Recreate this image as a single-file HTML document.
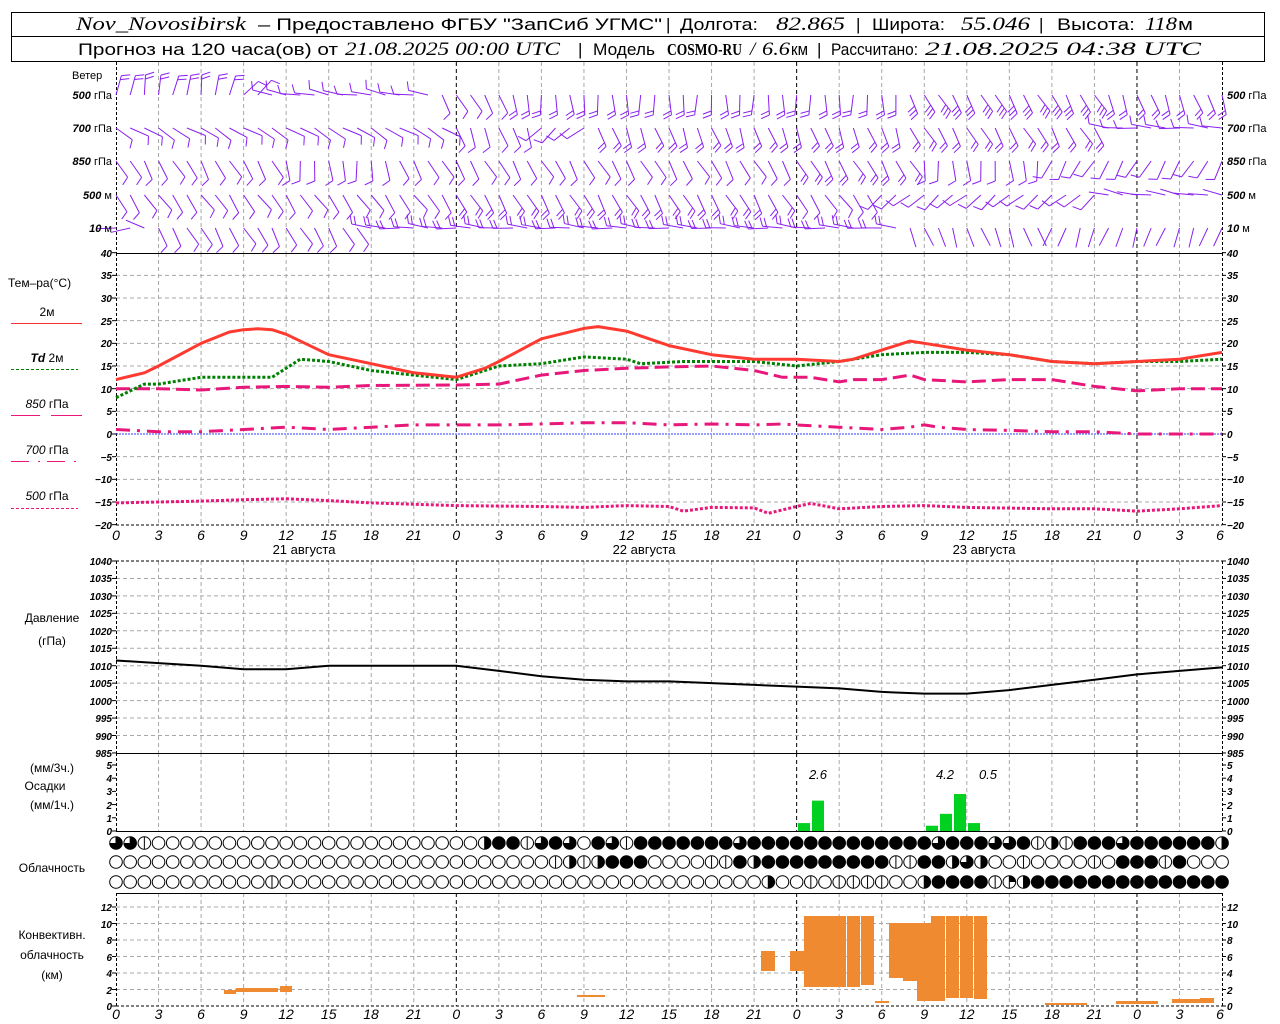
<!DOCTYPE html>
<html><head><meta charset="utf-8"><style>
html,body{margin:0;padding:0;background:#fff;}
svg{display:block;}
text{font-family:"Liberation Sans",sans-serif;fill:#000;}
.t{font-size:10px;font-style:italic;font-weight:bold;}
.h{font-size:14px;font-style:italic;}
.lb{font-size:12px;}
.hd{font-size:17px;}
.it{font-family:"Liberation Serif",serif;font-style:italic;font-size:19px;}
</style></head><body>
<svg id="s" width="1280" height="1024" viewBox="0 0 1280 1024" xmlns="http://www.w3.org/2000/svg">
<rect width="1280" height="1024" fill="#fff"/>
<g id="g"></g>
<!-- header -->
<rect x="11.5" y="12.5" width="1253" height="49" fill="none" stroke="#000"/>
<line x1="11" y1="36.5" x2="1265" y2="36.5" stroke="#000"/>
<text class="it" x="76" y="30" textLength="170" lengthAdjust="spacingAndGlyphs">Nov_Novosibirsk</text>
<text class="hd" x="258" y="30" textLength="404" lengthAdjust="spacingAndGlyphs">– Предоставлено ФГБУ "ЗапСиб УГМС"</text>
<text class="hd" x="666" y="30">|</text>
<text class="hd" x="680" y="30" textLength="78" lengthAdjust="spacingAndGlyphs">Долгота:</text>
<text class="it" x="776" y="30" textLength="69" lengthAdjust="spacingAndGlyphs">82.865</text>
<text class="hd" x="856" y="30">|</text>
<text class="hd" x="872" y="30" textLength="73" lengthAdjust="spacingAndGlyphs">Широта:</text>
<text class="it" x="961" y="30" textLength="69" lengthAdjust="spacingAndGlyphs">55.046</text>
<text class="hd" x="1039" y="30">|</text>
<text class="hd" x="1057" y="30" textLength="78" lengthAdjust="spacingAndGlyphs">Высота:</text>
<text class="it" x="1145" y="30" textLength="32" lengthAdjust="spacingAndGlyphs">118</text>
<text class="hd" x="1178" y="30" textLength="15" lengthAdjust="spacingAndGlyphs">м</text>

<text class="hd" x="78" y="55" textLength="260" lengthAdjust="spacingAndGlyphs">Прогноз на 120 часа(ов) от</text>
<text class="it" x="345" y="55" textLength="215" lengthAdjust="spacingAndGlyphs">21.08.2025 00:00 UTC</text>
<text class="hd" x="578" y="55">|</text>
<text class="hd" x="593" y="55" textLength="62" lengthAdjust="spacingAndGlyphs">Модель</text>
<text x="667" y="55" style="font-family:'Liberation Serif',serif;font-weight:bold;font-size:17px" textLength="75" lengthAdjust="spacingAndGlyphs">COSMO-RU</text>
<text class="it" x="750" y="55">/</text>
<text class="it" x="762" y="55" textLength="28" lengthAdjust="spacingAndGlyphs">6.6</text>
<text class="hd" x="791" y="55" textLength="17" lengthAdjust="spacingAndGlyphs">км</text>
<text class="hd" x="817" y="55">|</text>
<text class="hd" x="831" y="55" textLength="87" lengthAdjust="spacingAndGlyphs">Рассчитано:</text>
<text class="it" x="925" y="55" textLength="276" lengthAdjust="spacingAndGlyphs">21.08.2025 04:38 UTC</text>

<!-- wind labels -->
<g class="lb" style="font-size:11px">
<text x="72" y="79">Ветер</text>
<text x="112" y="99" text-anchor="end"><tspan font-style="italic" font-weight="bold">500</tspan> гПа</text>
<text x="112" y="132" text-anchor="end"><tspan font-style="italic" font-weight="bold">700</tspan> гПа</text>
<text x="112" y="165" text-anchor="end"><tspan font-style="italic" font-weight="bold">850</tspan> гПа</text>
<text x="112" y="199" text-anchor="end"><tspan font-style="italic" font-weight="bold">500</tspan> м</text>
<text x="112" y="232" text-anchor="end"><tspan font-style="italic" font-weight="bold">10</tspan>   м</text>
<text x="1227" y="99"><tspan font-style="italic" font-weight="bold">500</tspan> гПа</text>
<text x="1227" y="132"><tspan font-style="italic" font-weight="bold">700</tspan> гПа</text>
<text x="1227" y="165"><tspan font-style="italic" font-weight="bold">850</tspan> гПа</text>
<text x="1227" y="199"><tspan font-style="italic" font-weight="bold">500</tspan> м</text>
<text x="1227" y="232"><tspan font-style="italic" font-weight="bold">10</tspan>   м</text>
</g>

<!-- temp legend -->
<g class="lb">
<text x="8" y="287">Тем–ра(°С)</text>
<text x="47" y="316" text-anchor="middle">2м</text>
<text x="47" y="362" text-anchor="middle"><tspan font-style="italic" font-weight="bold">Td</tspan>   2м</text>
<text x="47" y="408" text-anchor="middle"><tspan font-style="italic">850</tspan> гПа</text>
<text x="47" y="454" text-anchor="middle"><tspan font-style="italic">700</tspan> гПа</text>
<text x="47" y="500" text-anchor="middle"><tspan font-style="italic">500</tspan> гПа</text>
<text x="52" y="622" text-anchor="middle">Давление</text>
<text x="52" y="645" text-anchor="middle">(гПа)</text>
<text x="52" y="772" text-anchor="middle">(мм/3ч.)</text>
<text x="45" y="790" text-anchor="middle">Осадки</text>
<text x="52" y="809" text-anchor="middle">(мм/1ч.)</text>
<text x="52" y="872" text-anchor="middle">Облачность</text>
<text x="52" y="939" text-anchor="middle">Конвективн.</text>
<text x="52" y="959" text-anchor="middle">облачность</text>
<text x="52" y="979" text-anchor="middle">(км)</text>
<text x="304" y="554" text-anchor="middle" style="font-size:13px">21  августа</text>
<text x="644" y="554" text-anchor="middle" style="font-size:13px">22  августа</text>
<text x="984" y="554" text-anchor="middle" style="font-size:13px">23  августа</text>
</g>
<g class="h" style="font-size:13px">
<text x="818" y="779" text-anchor="middle">2.6</text>
<text x="945" y="779" text-anchor="middle">4.2</text>
<text x="988" y="779" text-anchor="middle">0.5</text>
</g>

<!-- temp ticks -->
<g class="t" text-anchor="end">
<text x="112" y="257">40</text><text x="112" y="279">35</text><text x="112" y="302">30</text><text x="112" y="325">25</text><text x="112" y="347">20</text><text x="112" y="370">15</text><text x="112" y="393">10</text><text x="112" y="415">5</text><text x="112" y="438">0</text><text x="112" y="461">−5</text><text x="112" y="483">−10</text><text x="112" y="506">−15</text><text x="112" y="529">−20</text>
<text x="112" y="565">1040</text><text x="112" y="582">1035</text><text x="112" y="600">1030</text><text x="112" y="617">1025</text><text x="112" y="635">1020</text><text x="112" y="652">1015</text><text x="112" y="670">1010</text><text x="112" y="687">1005</text><text x="112" y="705">1000</text><text x="112" y="722">995</text><text x="112" y="740">990</text><text x="112" y="757">985</text>
<text x="112" y="769">5</text><text x="112" y="782">4</text><text x="112" y="795">3</text><text x="112" y="809">2</text><text x="112" y="822">1</text><text x="112" y="835">0</text>
<text x="112" y="911">12</text><text x="112" y="928">10</text><text x="112" y="944">8</text><text x="112" y="961">6</text><text x="112" y="977">4</text><text x="112" y="994">2</text><text x="112" y="1010">0</text>
</g>
<g class="t">
<text x="1227" y="257">40</text><text x="1227" y="279">35</text><text x="1227" y="302">30</text><text x="1227" y="325">25</text><text x="1227" y="347">20</text><text x="1227" y="370">15</text><text x="1227" y="393">10</text><text x="1227" y="415">5</text><text x="1227" y="438">0</text><text x="1227" y="461">−5</text><text x="1227" y="483">−10</text><text x="1227" y="506">−15</text><text x="1227" y="529">−20</text>
<text x="1227" y="565">1040</text><text x="1227" y="582">1035</text><text x="1227" y="600">1030</text><text x="1227" y="617">1025</text><text x="1227" y="635">1020</text><text x="1227" y="652">1015</text><text x="1227" y="670">1010</text><text x="1227" y="687">1005</text><text x="1227" y="705">1000</text><text x="1227" y="722">995</text><text x="1227" y="740">990</text><text x="1227" y="757">985</text>
<text x="1227" y="769">5</text><text x="1227" y="782">4</text><text x="1227" y="795">3</text><text x="1227" y="809">2</text><text x="1227" y="822">1</text><text x="1227" y="835">0</text>
<text x="1227" y="911">12</text><text x="1227" y="928">10</text><text x="1227" y="944">8</text><text x="1227" y="961">6</text><text x="1227" y="977">4</text><text x="1227" y="994">2</text><text x="1227" y="1010">0</text>
</g>
<!-- hour labels -->
<g class="h" text-anchor="middle">
<text x="116" y="540">0</text><text x="158.5" y="540">3</text><text x="201" y="540">6</text><text x="243.6" y="540">9</text><text x="286" y="540">12</text><text x="328.7" y="540">15</text><text x="371" y="540">18</text><text x="413.8" y="540">21</text><text x="456.3" y="540">0</text><text x="498.9" y="540">3</text><text x="541.4" y="540">6</text><text x="584" y="540">9</text><text x="626.5" y="540">12</text><text x="669" y="540">15</text><text x="711.6" y="540">18</text><text x="754" y="540">21</text><text x="796.6" y="540">0</text><text x="839.2" y="540">3</text><text x="881.7" y="540">6</text><text x="924.3" y="540">9</text><text x="966.8" y="540">12</text><text x="1009.3" y="540">15</text><text x="1052" y="540">18</text><text x="1094.4" y="540">21</text><text x="1137" y="540">0</text><text x="1179.5" y="540">3</text><text x="1220" y="540">6</text>
<text x="116" y="1019">0</text><text x="158.5" y="1019">3</text><text x="201" y="1019">6</text><text x="243.6" y="1019">9</text><text x="286" y="1019">12</text><text x="328.7" y="1019">15</text><text x="371" y="1019">18</text><text x="413.8" y="1019">21</text><text x="456.3" y="1019">0</text><text x="498.9" y="1019">3</text><text x="541.4" y="1019">6</text><text x="584" y="1019">9</text><text x="626.5" y="1019">12</text><text x="669" y="1019">15</text><text x="711.6" y="1019">18</text><text x="754" y="1019">21</text><text x="796.6" y="1019">0</text><text x="839.2" y="1019">3</text><text x="881.7" y="1019">6</text><text x="924.3" y="1019">9</text><text x="966.8" y="1019">12</text><text x="1009.3" y="1019">15</text><text x="1052" y="1019">18</text><text x="1094.4" y="1019">21</text><text x="1137" y="1019">0</text><text x="1179.5" y="1019">3</text><text x="1220" y="1019">6</text>
</g>
</svg>
<script>
(function(){
var NS="http://www.w3.org/2000/svg",g=document.getElementById("g");
function el(n,a){var e=document.createElementNS(NS,n);for(var k in a)e.setAttribute(k,a[k]);g.appendChild(e);return e;}
function X(h){return 116+h*14.18;}
function YT(t){return 434-t*4.533;}
function YP(p){return 561+(1040-p)*3.49;}
function YR(v){return 831-v*13.2;}
function YC(k){return 1006-k*8.25;}
// legend lines
el("line",{x1:11,y1:323.5,x2:82,y2:323.5,stroke:"#ff3030","stroke-width":1});
el("line",{x1:11,y1:369.5,x2:78,y2:369.5,stroke:"#008000","stroke-dasharray":"3,2"});
el("line",{x1:11,y1:415.5,x2:40,y2:415.5,stroke:"#e8187a"});el("line",{x1:51,y1:415.5,x2:82,y2:415.5,stroke:"#e8187a"});
el("path",{d:"M11 461.5h18M38 461.5h2M47 461.5h18M74 461.5h2",stroke:"#e8187a"});
el("line",{x1:11,y1:508.5,x2:78,y2:508.5,stroke:"#e8187a","stroke-dasharray":"3,2"});
// horizontal grids
function hg(y){el("line",{x1:116,y1:y,x2:1222,y2:y,stroke:"#a8a8a8","stroke-dasharray":"4,3"});}
for(var t=35;t>=-15;t-=5)if(t!=0)hg(YT(t));
for(var p=1035;p>=990;p-=5)hg(YP(p));
for(var k=2;k<=12;k+=2)hg(YC(k));
// vertical grids
var spans=[[62,253],[253,525],[561,753],[753,831],[893,1006]];
for(var h=3;h<78;h+=3){var x=X(h),day=(h%24==0);
 spans.forEach(function(s){el("line",{x1:x,y1:s[0],x2:x,y2:s[1],stroke:day?"#000":"#a8a8a8","stroke-dasharray":"4,3"});});}
// axes
[116,1222].forEach(function(x){spans.forEach(function(s){el("line",{x1:x+0.5,y1:s[0],x2:x+0.5,y2:s[1],stroke:"#000","stroke-dasharray":"3,2"});});});
el("line",{x1:116,y1:253.5,x2:1222,y2:253.5,stroke:"#000"});
el("line",{x1:116,y1:525,x2:1222,y2:525,stroke:"#000","stroke-dasharray":"3,2"});
el("line",{x1:116,y1:561,x2:1222,y2:561,stroke:"#000","stroke-dasharray":"3,2"});
el("line",{x1:116,y1:753.5,x2:1222,y2:753.5,stroke:"#000"});
el("line",{x1:116,y1:831.5,x2:1222,y2:831.5,stroke:"#000"});
el("line",{x1:116,y1:893.5,x2:1222,y2:893.5,stroke:"#000"});
el("line",{x1:116,y1:1006,x2:1222,y2:1006,stroke:"#000","stroke-dasharray":"3,2"});
el("line",{x1:116,y1:434,x2:1222,y2:434,stroke:"#3040ff","stroke-dasharray":"2,1"});
// ticks
function tk(y){el("line",{x1:112,y1:y,x2:116,y2:y,stroke:"#000"});el("line",{x1:1222,y1:y,x2:1226,y2:y,stroke:"#000"});}
for(t=40;t>=-20;t-=5)tk(YT(t));for(p=1040;p>=985;p-=5)tk(YP(p));for(k=0;k<=5;k++)tk(YR(k));for(k=0;k<=12;k+=2)tk(YC(k));
// curves
function curve(d,f,st){var pts=[];for(var i=0;i<d.length;i+=2)pts.push(X(d[i]).toFixed(1)+","+f(d[i+1]).toFixed(1));
 var a={points:pts.join(" "),fill:"none","stroke-linejoin":"round"};for(var k in st)a[k]=st[k];el("polyline",a);}
var PK="#e8187a";
curve([0,-15.2,6,-14.8,9,-14.5,12,-14.3,15,-14.7,18,-15.2,24,-15.8,30,-16,33,-16.2,36,-15.8,39,-16,40,-17,42,-16.2,45,-16.3,46,-17.5,48,-16,49,-15.3,51,-16.5,54,-16,57,-15.8,60,-16.2,66,-16.5,69,-16.5,72,-17,75,-16.5,78,-15.8],YT,{stroke:PK,"stroke-width":3,"stroke-dasharray":"3,2"});
curve([0,1,3,0.5,6,0.5,9,1,12,1.5,15,1,18,1.5,21,2,24,2,27,2,30,2.2,33,2.5,36,2.5,39,2,42,2.2,45,2,47,2.2,48,2,51,1.5,54,1,56,1.5,57,2,58,1.5,60,1,63,0.8,66,0.5,69,0.5,72,0,75,0,78,0],YT,{stroke:PK,"stroke-width":3,"stroke-dasharray":"14,7,3,7"});
curve([0,10,3,10,6,9.7,9,10.3,12,10.5,15,10.3,18,10.7,24,10.8,27,11,30,13,33,14,36,14.5,39,14.8,42,15,45,14,47,12.5,49,12.5,51,11.5,52,12,54,12,56,13,57,12,60,11.5,63,12,66,12,69,10.5,72,9.5,75,10,78,10],YT,{stroke:PK,"stroke-width":3,"stroke-dasharray":"14,6"});
curve([0,8,2,11,3,11,6,12.5,11,12.5,13,16.5,15,16,18,14,21,13,24,12,27,15,30,15.5,33,17,36,16.5,37,15.5,40,16,45,16,48,15,51,16,54,17.5,57,18,60,18,63,17.5,66,16,69,15.5,72,16,75,16,78,16.5],YT,{stroke:"#008000","stroke-width":3,"stroke-dasharray":"3,2"});
curve([0,12,2,13.5,3,15,6,20,8,22.5,9,23,10,23.2,11,23,12,22,15,17.5,18,15.5,21,13.5,24,12.5,26,14.5,27,16,30,21,33,23.3,34,23.7,36,22.7,39,19.5,42,17.5,45,16.5,48,16.5,51,16,52,16.5,54,18.5,56,20.5,57,20,60,18.5,63,17.5,66,16,69,15.5,72,16,75,16.5,78,18],YT,{stroke:"#ff3a30","stroke-width":3});
curve([0,1011.5,2,1011,6,1010,9,1009,12,1009,15,1010,18,1010,24,1010,27,1008.5,30,1007,33,1006,36,1005.5,39,1005.5,42,1005,45,1004.5,48,1004,51,1003.5,54,1002.5,57,1002,60,1002,63,1003,66,1004.5,69,1006,72,1007.5,75,1008.5,78,1009.5],YP,{stroke:"#000","stroke-width":2});
// precip bars
[[798,0.6],[812,2.3],[926,0.4],[940,1.3],[954,2.8],[968,0.6]].forEach(function(b){el("rect",{x:b[0],y:YR(b[1]),width:12,height:831-YR(b[1]),fill:"#00d020"});});
// convective
var OR="#f08a30";
[[224,236,990,994],[236,278,988,992],[280,292,986,992],[577,605,995,997],[761,775,951,971],[790,804,951,971],[804,846,916,987],[847,860,916,987],[861,874,916,985],[875,889,1001,1003],[889,903,923,978],[903,917,923,981],[917,931,923,1001],[931,945,916,1001],[946,959,916,998],[960,973,916,998],[974,987,916,999],[1045,1087,1003,1005],[1116,1158,1001,1004],[1172,1200,999,1003],[1200,1214,998,1003]].forEach(function(r){el("rect",{x:r[0],y:r[2],width:r[1]-r[0],height:r[3]-r[2],fill:OR});});
// clouds
var rows=[[843,"ttv"+"o".repeat(23)+"hffvtftoftv"+"fffffff"+"t"+"fffffffffffff"+"t"+"fff"+"tt"+"f"+"vhv"+"fff"+"t"+"ffffff"+"h"],
[862,"o".repeat(31)+"vhvhff"+"f"+"oooo"+"vv"+"fh"+"fffffffff"+"vv"+"ff"+"hth"+"oovoooovo"+"fffvfooo"],
[882,"o".repeat(11)+"v"+"o".repeat(34)+"h"+"oovovvvvoo"+"h"+"ffff"+"vqh"+"f".repeat(14)]];
rows.forEach(function(r){var y=r[0];for(var i=0;i<79;i++){var c=r[1][i]||"o",x=X(i),R=6.3;
 el("circle",{cx:x,cy:y,r:R,fill:c=="f"?"#000":"#fff",stroke:"#000","stroke-width":1});
 if(c=="v"||c=="h"||c=="t"||c=="q")el("line",{x1:x,y1:y-R,x2:x,y2:y+R,stroke:"#000"});
 if(c=="h")el("path",{d:"M"+x+" "+(y-R)+"A"+R+" "+R+" 0 0 1 "+x+" "+(y+R)+"Z",fill:"#000"});
 if(c=="t")el("path",{d:"M"+x+" "+y+"L"+x+" "+(y-R)+"A"+R+" "+R+" 0 1 1 "+(x-R)+" "+y+"Z",fill:"#000"});
 if(c=="q")el("path",{d:"M"+x+" "+y+"L"+x+" "+(y-R)+"A"+R+" "+R+" 0 0 1 "+(x+R)+" "+y+"Z",fill:"#000"});
}});
// wind barbs
var PU="#8a1ff0";
var prof=[[95,[[0,10,2],[9,50,1],[11,-80,1],[23,150,1],[28,175,2],[36,180,2],[56,150,3],[70,160,2]]],
[128,[[0,120,1],[24,160,1],[30,-130,1],[34,160,2],[56,150,2],[70,-85,1]]],
[161,[[0,150,1],[12,175,1],[20,150,1],[48,150,2],[57,175,1],[66,-150,1]]],
[195,[[0,145,1],[24,150,2],[48,145,1],[54,-130,1],[70,-80,0]]],
[228,[[0,-100,0],[2,-60,0],[3,150,1],[18,-85,2],[56,160,0],[66,200,0]]]];
prof.forEach(function(p){var y=p[0],seg=p[1];for(var h=0;h<=78;h++){var s=seg[0];seg.forEach(function(q){if(h>=q[0])s=q;});
 var th=(s[1]+8*Math.sin(h*1.7+y))*Math.PI/180,n=s[2],L=20,x=X(h);
 var ex=x+L*Math.sin(th),ey=y-L*Math.cos(th);
 el("line",{x1:x,y1:y,x2:ex,y2:ey,stroke:PU,"stroke-width":1});
 for(var i=0;i<n;i++){var d=L-i*4,bx=x+d*Math.sin(th),by=y-d*Math.cos(th),ft=th+1.2;
  el("line",{x1:bx,y1:by,x2:bx+9*Math.sin(ft),y2:by-9*Math.cos(ft),stroke:PU,"stroke-width":1});}
}});
})();
</script>
</body></html>
